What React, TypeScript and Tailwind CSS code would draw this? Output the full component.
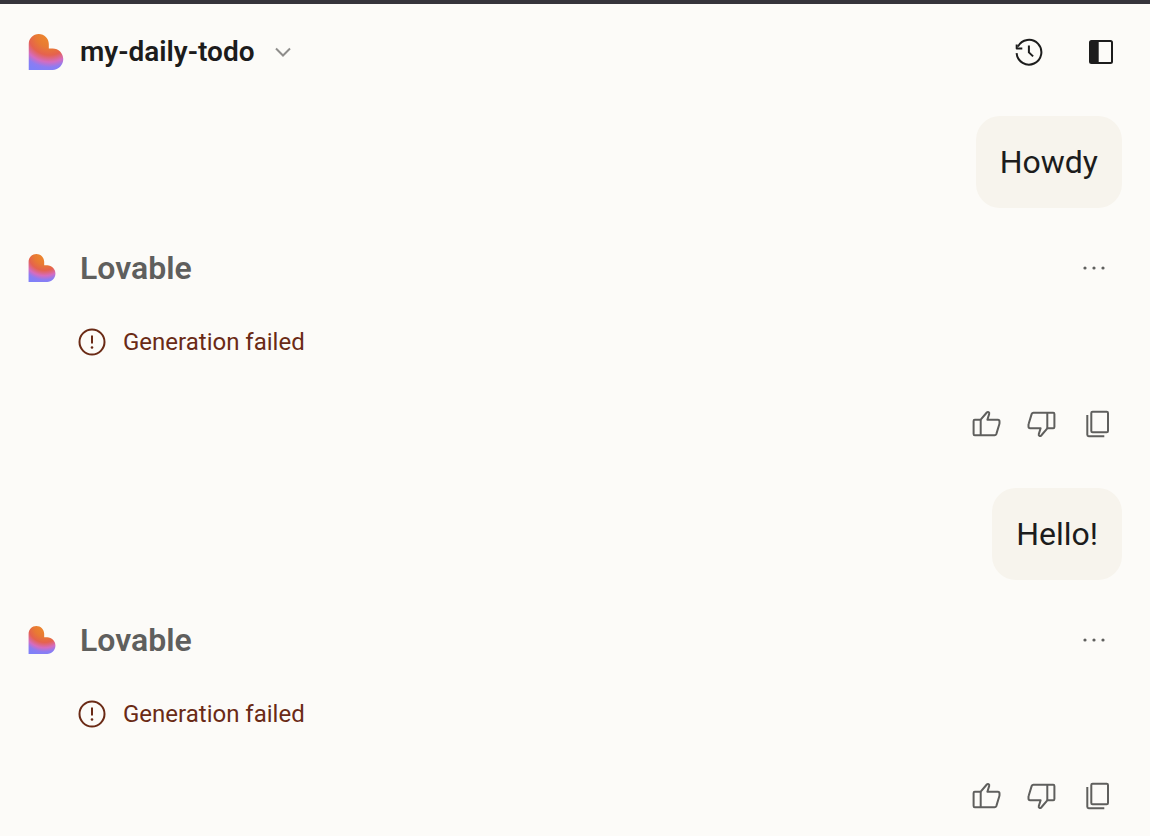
import { useId } from "react";

const messages = [
  { id: 1, text: "Howdy" },
  { id: 2, text: "Hello!" },
];

function Logo({ className }: { className?: string }) {
  const id = useId();

  return (
    <svg viewBox="0 0 121 122" className={className} aria-hidden="true">
      <defs>
        <radialGradient id={id} gradientUnits="userSpaceOnUse" cx="72" cy="0" r="128">
          <stop offset="0" stopColor="#ee8a2c" />
          <stop offset="0.36" stopColor="#e87a33" />
          <stop offset="0.56" stopColor="#e5624e" />
          <stop offset="0.74" stopColor="#d56cc0" />
          <stop offset="0.88" stopColor="#8c7cf2" />
          <stop offset="1" stopColor="#7f80f8" />
        </radialGradient>
      </defs>
      <path
        fill={`url(#${id})`}
        d="M36 0c19 0 34 15 34 34v15h13c20 0 36 16 36 36s-16 37-36 37H2V34C2 15 17 0 36 0Z"
      />
    </svg>
  );
}

function ChevronIcon() {
  return (
    <svg viewBox="0 0 24 24" className="h-6 w-6 text-[#8e8d8b]" fill="none" stroke="currentColor" strokeWidth="2" aria-hidden="true">
      <path d="m5 8.5 7 7 7-7" />
    </svg>
  );
}

function HistoryIcon() {
  return (
    <svg viewBox="0 0 32 32" className="h-8 w-8" fill="none" stroke="currentColor" strokeWidth="2" aria-hidden="true">
      <path d="M3.6 17.2a12.4 12.4 0 1 0 1.3-6.6" />
      <path d="M3.7 8.6v4h5.6" strokeLinejoin="round" />
      <path d="M15.9 9.4v7l4.2 4" />
    </svg>
  );
}

function PanelIcon() {
  return (
    <svg viewBox="0 0 32 32" className="h-8 w-8" aria-hidden="true">
      <rect x="5" y="5" width="22" height="22" rx="1.5" fill="none" stroke="currentColor" strokeWidth="2" />
      <path d="M5 5h8.7v22H5z" fill="currentColor" />
    </svg>
  );
}

function ThumbIcon({ className = "" }: { className?: string }) {
  return (
    <svg viewBox="0 0 32 32" className={`h-8 w-8 ${className}`} fill="none" stroke="currentColor" strokeWidth="2" strokeLinejoin="round" aria-hidden="true">
      <path d="M10.7 11.7H4.8a1.2 1.2 0 0 0-1.2 1.2V26a1.2 1.2 0 0 0 1.2 1.2h19.8c.8 0 1.4-.4 1.7-1.1l3-9.8c.1-.3.2-.6.2-1v-1.9c0-.9-.7-1.7-1.6-1.7H17.4l1.8-5.8c.5-1.7-1.3-2.6-2.4-1.4Z" />
      <path d="M10.7 11.7v15.5" />
    </svg>
  );
}

function CopyIcon() {
  return (
    <svg viewBox="0 0 32 32" className="h-8 w-8" fill="none" stroke="currentColor" strokeWidth="2" aria-hidden="true">
      <rect x="9.3" y="3.7" width="16.7" height="20.6" rx="1.3" />
      <path d="M5.3 7v19.8c0 .8.6 1.4 1.4 1.4h15.6" />
    </svg>
  );
}

function AlertIcon() {
  return (
    <svg viewBox="0 0 28 28" className="h-7 w-7" fill="none" stroke="currentColor" strokeWidth="2" aria-hidden="true">
      <circle cx="14" cy="14" r="12.5" />
      <path d="M14 7.5v8" />
      <circle cx="14" cy="19.5" r="1.3" fill="currentColor" stroke="none" />
    </svg>
  );
}

function Turn({ text }: { text: string }) {
  return (
    <article>
      <div className="flex justify-end">
        <p className="rounded-3xl bg-[#f7f4ed] p-6 text-[32px] leading-11">{text}</p>
      </div>

      <div className="mt-10 flex h-10 items-center text-[#5f5f5d]">
        <Logo className="h-7 w-7" />
        <h2 className="ml-6 text-[32px] leading-10 font-semibold">Lovable</h2>
        <button type="button" aria-label="More options" className="mr-3 ml-auto">
          <svg viewBox="0 0 32 32" className="h-8 w-8" fill="currentColor" aria-hidden="true">
            <circle cx="7" cy="16" r="1.6" />
            <circle cx="16" cy="16" r="1.6" />
            <circle cx="25" cy="16" r="1.6" />
          </svg>
        </button>
      </div>

      <div role="alert" className="mt-9 ml-[50px] flex h-9 items-center gap-[17px] text-[#6a2a15]">
        <AlertIcon />
        <span className="text-2xl">Generation failed</span>
      </div>

      <div className="mt-12 mr-2 flex justify-end gap-6 text-[#5f5f5d]">
        <button type="button" aria-label="Good response">
          <ThumbIcon />
        </button>
        <button type="button" aria-label="Bad response">
          <ThumbIcon className="rotate-180" />
        </button>
        <button type="button" aria-label="Copy message">
          <CopyIcon />
        </button>
      </div>
    </article>
  );
}

export default function App() {
  return (
    <div className="min-h-screen border-t-4 border-[#36343b] bg-[#fcfbf8] font-['Roboto',sans-serif] text-[#1c1c1c]">
      <header className="flex h-24 items-center justify-between pr-[33px] pl-7">
        <button type="button" className="flex items-center">
          <Logo className="h-9 w-9" />
          <span className="ml-4 text-[28px] leading-9 font-semibold">my-daily-todo</span>
          <span className="ml-4">
            <ChevronIcon />
          </span>
        </button>
        <div className="flex items-center gap-10">
          <button type="button" aria-label="History">
            <HistoryIcon />
          </button>
          <button type="button" aria-label="Toggle sidebar">
            <PanelIcon />
          </button>
        </div>
      </header>

      <main className="flex flex-col gap-12 px-7 pt-4 pb-6">
        {messages.map((message) => (
          <Turn key={message.id} text={message.text} />
        ))}
      </main>
    </div>
  );
}
